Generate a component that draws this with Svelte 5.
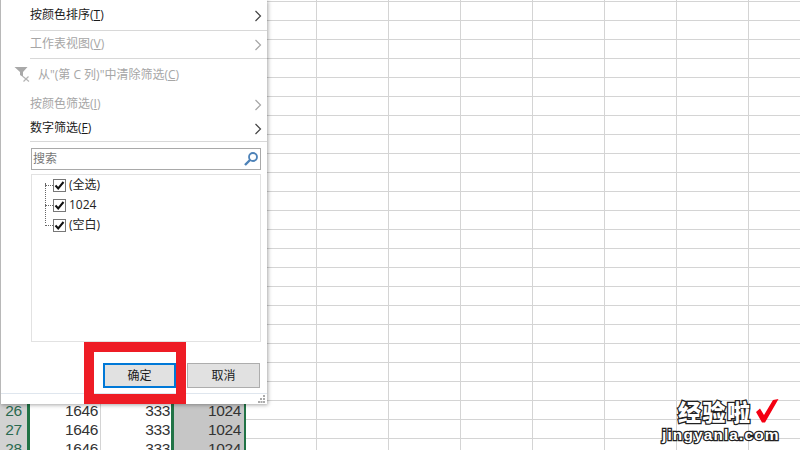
<script>
  const topItems = [
    { label: '按颜色排序(', key: 'T', off: false, h: 30 },
    { label: '工作表视图(', key: 'V', off: true, h: 28 }
  ];
  const lowItems = [
    { label: '按颜色筛选(', key: 'I', off: true, h: 25, sep: false },
    { label: '数字筛选(', key: 'F', off: false, h: 25, sep: true }
  ];
  const tree = ['(全选)', '1024', '(空白)'];
  const rows = [26, 27, 28];
</script>

<div class="page">
  <div class="rows">
    {#each rows as r}
      <div class="row">
        <div class="num">{r}</div>
        <div class="cell">1646</div>
        <div class="cell">333</div>
        <div class="cell sel">1024</div>
      </div>
    {/each}
  </div>

  <div class="popup">
    <div class="menu">
      {#each topItems as it}
        <div class="item sep" class:off={it.off} style="height:{it.h}px">
          <span class="up">{it.label}<u>{it.key}</u>)</span>
          <svg class="chev" width="8" height="12" viewBox="0 0 8 12"><path d="M1.5 1 L6.5 6 L1.5 11" fill="none" stroke="currentColor" stroke-width="1.2"/></svg>
        </div>
      {/each}
      <div class="clear">
        <svg class="funnel" width="20" height="17" viewBox="0 0 20 17">
          <path d="M0.5 1H13.5L9 6V11L6 9V6Z" fill="#a9a9a9"/>
          <path d="M9 10.5L15 15.5M14.5 10.5L9.5 15.5" stroke="#b4b4b4" stroke-width="1.2"/>
        </svg>
        <span>从"(第 C 列)"中清除筛选(<u>C</u>)</span>
      </div>
      {#each lowItems as it}
        <div class="item" class:off={it.off} class:sep={it.sep} style="height:{it.h}px">
          <span class="up">{it.label}<u>{it.key}</u>)</span>
          <svg class="chev" width="8" height="12" viewBox="0 0 8 12"><path d="M1.5 1 L6.5 6 L1.5 11" fill="none" stroke="currentColor" stroke-width="1.2"/></svg>
        </div>
      {/each}
    </div>

    <div class="search">
      <span class="up">搜索</span>
      <svg width="16" height="16" viewBox="0 0 16 16">
        <circle cx="10" cy="6" r="4" fill="none" stroke="#4d82b8" stroke-width="1.8"/>
        <path d="M7 9 L2 14" stroke="#4d82b8" stroke-width="2.4"/>
      </svg>
    </div>

    <div class="list">
      <div class="vline"></div>
      {#each tree as t}
        <div class="node">
          <span class="dots"></span>
          <span class="box">
            <svg width="11" height="11" viewBox="0 0 11 11"><path d="M1.5 5.5 L4.2 8.5 L9.5 2" fill="none" stroke="#111" stroke-width="2"/></svg>
          </span>
          <span class="nlabel">{t}</span>
        </div>
      {/each}
    </div>

    <div class="btns">
      <button class="btn primary"><span class="up">确定</span></button>
      <button class="btn"><span class="up">取消</span></button>
    </div>

    <div class="status">
      <svg width="8" height="8" viewBox="0 0 8 8" fill="#aaa">
        <rect x="5" y="0" width="2" height="2"/><rect x="2" y="3" width="2" height="2"/><rect x="5" y="3" width="2" height="2"/><rect x="0" y="6" width="2" height="2"/><rect x="2.5" y="6" width="2" height="2"/><rect x="5" y="6" width="2" height="2"/>
      </svg>
    </div>
  </div>

  <div class="redbox"></div>

  <div class="mark">
    <div class="mark-top"><span class="cn">经验啦</span><svg width="23" height="24" viewBox="0 0 23 24"><path d="M0 13 L4 9.5 L8 16 L17 1 L22.5 0 L9 23.5 L6 23.5 Z" fill="#f40012"/></svg></div>
    <div class="en">jingyanla.com</div>
  </div>
</div>

<style>
  :global(body) { margin: 0; }
  .page {
    position: relative;
    width: 800px;
    height: 450px;
    overflow: hidden;
    background-color: #fff;
    background-image:
      linear-gradient(#d4d4d4 1px, transparent 1px),
      linear-gradient(90deg, #d4d4d4 1px, transparent 1px);
    background-size: 72px 19px;
    background-position: 28px 1px;
    font-family: "Open Sans", "Noto Sans CJK SC", sans-serif;
  }
  .rows {
    position: absolute;
    left: 0;
    top: 401px;
    width: 246px;
  }
  .row {
    display: grid;
    grid-template-columns: 27px 74px 73px 72px;
    height: 19px;
    font: 15.5px/20px "Liberation Sans", sans-serif;
    letter-spacing: -0.4px;
    color: #333;
  }
  .num { background: #d2d2d2; color: #2a6a50; text-align: center; border-bottom: 1px solid #c4c4c4; box-sizing: border-box; }
  .cell {
    text-align: right;
    padding-right: 2px;
    border-right: 1px solid #d4d4d4;
    border-bottom: 1px solid #d4d4d4;
    background: #fff;
    box-sizing: border-box;
  }
  .row .cell:nth-child(2) { border-left: 3px solid #217346; }
  .row .cell:nth-child(3) { border-right: 3px solid #217346; padding-right: 1px; }
  .cell.sel { background: #c6c6c6; border-right: 2px solid #217346; padding-right: 3px; border-bottom-color: #d8d8d8; }

  .popup {
    position: absolute;
    left: 0;
    top: 0;
    width: 267px;
    height: 404px;
    background: #fff;
    border-left: 1px solid #b8b8b8;
    box-sizing: border-box;
    box-shadow: 1px 1px 4px rgba(0, 0, 0, 0.35);
    display: flex;
    flex-direction: column;
    font-size: 12px;
    color: #1a1a1a;
  }
  .menu { padding-top: 1px; }
  .up { position: relative; top: -1px; }
  .item {
    display: flex;
    align-items: center;
    justify-content: space-between;
    box-sizing: border-box;
    margin-left: 29px;
    padding-right: 5px;
    line-height: 16px;
  }
  .item.sep { border-bottom: 1px solid #d8d8d8; }
  .item.off { color: #a6a6a6; }
  .chev { color: #444; }
  .item.off .chev { color: #a6a6a6; }
  .clear {
    height: 33px;
    display: flex;
    align-items: center;
    color: #a6a6a6;
    margin-left: 13px;
    gap: 4px;
  }
  .clear span { position: relative; top: -2px; }
  .funnel { margin-top: -2px; }
  .search {
    margin: 6px 6px 0 30px;
    height: 22px;
    box-sizing: border-box;
    border: 1px solid #a9a9a9;
    display: flex;
    align-items: center;
    justify-content: space-between;
    padding: 0 1px 0 1px;
    color: #777;
  }
  .list {
    position: relative;
    margin: 4px 6px 0 30px;
    height: 168px;
    box-sizing: border-box;
    border: 1px solid #e2e2e2;
  }
  .vline {
    position: absolute;
    left: 13px;
    top: 8px;
    height: 40px;
    border-left: 1px dotted #666;
  }
  .node {
    display: flex;
    align-items: center;
    height: 20px;
    padding-left: 13px;
  }
  .dots { width: 8px; border-top: 1px dotted #666; }
  .box {
    width: 11px;
    height: 11px;
    border: 1px solid #777;
    display: flex;
    background: #fff;
    margin-right: 4px;
  }
  .nlabel { color: #222; position: relative; top: -1px; left: -1px; }
  .btns {
    display: flex;
    justify-content: flex-end;
    gap: 11px;
    margin: 21px 7px 0 0;
  }
  .btn {
    width: 73px;
    height: 25px;
    box-sizing: border-box;
    padding: 0;
    border: 1px solid #adadad;
    background: #e1e1e1;
    font: inherit;
    color: #1a1a1a;
  }
  .btn.primary { border: 2px solid #0078d7; }
  .status {
    margin-top: 5px;
    flex: 1;
    border-top: 1px solid #dfe6ee;
    display: flex;
    justify-content: flex-end;
    align-items: flex-end;
    padding: 0 1px 1px 0;
  }
  .redbox {
    position: absolute;
    left: 84px;
    top: 342px;
    width: 102px;
    height: 62px;
    box-sizing: border-box;
    border: 10px solid #ee1c25;
  }
  .mark {
    position: absolute;
    left: 660px;
    top: 397px;
    width: 140px;
    color: #fff;
    font-weight: 700;
  }
  .mark-top { display: flex; align-items: center; height: 28px; }
  .cn {
    font: 900 23px/28px "Noto Sans CJK SC", sans-serif;
    -webkit-text-stroke: 2.5px #222;
    paint-order: stroke fill;
    letter-spacing: 1.5px;
    margin: 0 4.5px 0 18px;
  }
  .en {
    font: 700 15.5px/20px "Liberation Sans", sans-serif;
    -webkit-text-stroke: 2.5px #222;
    paint-order: stroke fill;
    letter-spacing: 1.1px;
    margin-left: 2px;
  }
</style>
